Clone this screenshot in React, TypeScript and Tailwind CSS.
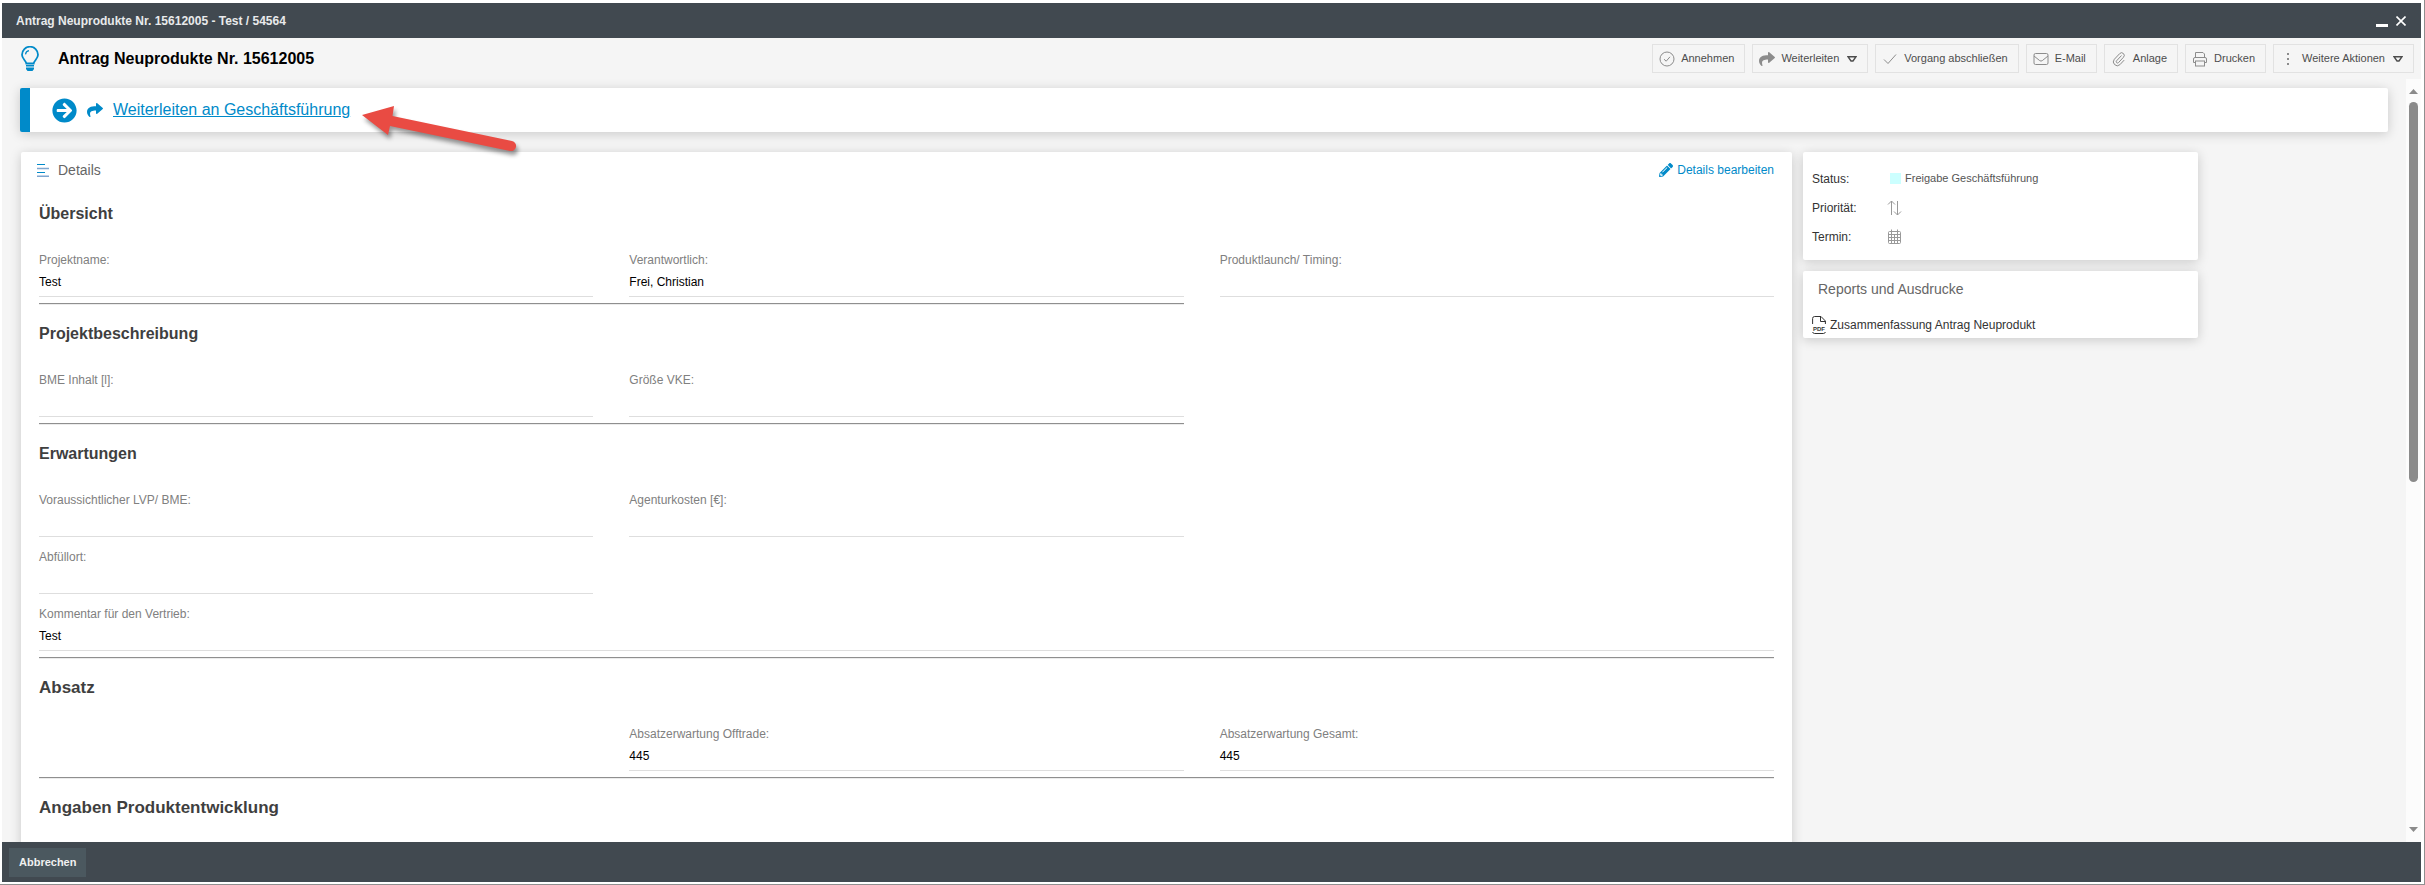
import React from "react";
import { FaShare, FaPencilAlt, FaArrowCircleRight } from "react-icons/fa";

interface Field {
  label: string;
  value?: string;
  className?: string;
}

interface Section {
  title: string;
  fields: Field[];
  wide?: boolean;
  large?: boolean;
}

interface ToolbarAction {
  label: string;
  icon: React.ReactNode;
  menu?: boolean;
}

const sections: Section[] = [
  {
    title: "Übersicht",
    fields: [
      { label: "Projektname:", value: "Test" },
      { label: "Verantwortlich:", value: "Frei, Christian" },
      { label: "Produktlaunch/ Timing:" },
    ],
  },
  {
    title: "Projektbeschreibung",
    fields: [{ label: "BME Inhalt [l]:" }, { label: "Größe VKE:" }],
  },
  {
    title: "Erwartungen",
    wide: true,
    fields: [
      { label: "Voraussichtlicher LVP/ BME:" },
      { label: "Agenturkosten [€]:" },
      { label: "Abfüllort:", className: "col-start-1" },
      { label: "Kommentar für den Vertrieb:", value: "Test", className: "col-span-3" },
    ],
  },
  {
    title: "Absatz",
    wide: true,
    large: true,
    fields: [
      { label: "Absatzerwartung Offtrade:", value: "445", className: "col-start-2" },
      { label: "Absatzerwartung Gesamt:", value: "445" },
    ],
  },
  { title: "Angaben Produktentwicklung", wide: true, large: true, fields: [] },
];

const LineIcon: React.FC<{ children: React.ReactNode; className?: string }> = ({
  children,
  className = "h-4 w-4",
}) => (
  <svg viewBox="0 0 16 16" fill="none" stroke="currentColor" className={className} aria-hidden="true">
    {children}
  </svg>
);

const actions: ToolbarAction[] = [
  {
    label: "Annehmen",
    icon: (
      <LineIcon>
        <circle cx="8" cy="8" r="7" />
        <path d="M5 8.2l2.2 2L11 5.8" />
      </LineIcon>
    ),
  },
  { label: "Weiterleiten", icon: <FaShare className="h-4 w-4" />, menu: true },
  {
    label: "Vorgang abschließen",
    icon: (
      <LineIcon>
        <path d="M2 8.500l4 4L14 3.500" />
      </LineIcon>
    ),
  },
  {
    label: "E-Mail",
    icon: (
      <LineIcon>
        <rect x="1" y="2.500" width="14" height="11" rx="1.500" />
        <path d="M1 5l5.700 4.600q1.300 1 2.600 0L15 5" />
      </LineIcon>
    ),
  },
  {
    label: "Anlage",
    icon: (
      <LineIcon>
        <path d="M10.500 4.500L5.600 9.800a1.300 1.300 0 0 0 1.900 1.800l5-5.400a2.600 2.600 0 0 0-3.800-3.600L3.300 8.300a3.900 3.900 0 0 0 5.600 5.400l4.300-4.600" />
      </LineIcon>
    ),
  },
  {
    label: "Drucken",
    icon: (
      <LineIcon>
        <path d="M3.500 6.500V1.500h7.500l1.500 1.500v3.500M3.500 11.500h-2V8q0-1.500 1.500-1.500h10q1.500 0 1.500 1.500v3.500h-2" />
        <rect x="3.500" y="10" width="9" height="5" />
      </LineIcon>
    ),
  },
  {
    label: "Weitere Aktionen",
    menu: true,
    icon: (
      <svg viewBox="0 0 16 16" fill="currentColor" className="h-4 w-4" aria-hidden="true">
        <rect x="7" y="2" width="2" height="2" />
        <rect x="7" y="7" width="2" height="2" />
        <rect x="7" y="12" width="2" height="2" />
      </svg>
    ),
  },
];

const TitleBar: React.FC = () => (
  <header className="flex h-[35px] shrink-0 items-center justify-between bg-[#414950] pr-[15px] pl-3.5 text-white">
    <span className="text-xs font-bold text-[#e8eaeb]">
      Antrag Neuprodukte Nr. 15612005 - Test / 54564
    </span>
    <div className="flex items-center gap-2">
      <button type="button" aria-label="Minimieren" className="flex h-4 w-3 items-end pb-0.5">
        <span className="h-[3px] w-full bg-white" />
      </button>
      <button type="button" aria-label="Schließen">
        <svg viewBox="0 0 10 10" stroke="currentColor" strokeWidth="1.6" className="h-2.5 w-2.5">
          <path d="M0.500 0.500l9 9M9.500 0.500l-9 9" />
        </svg>
      </button>
    </div>
  </header>
);

const Toolbar: React.FC = () => (
  <div className="flex h-[41px] shrink-0 items-start justify-between pt-1.5 pr-[7px] pl-[18px]">
    <div className="flex h-[30px] items-center">
      <svg viewBox="0 0 20 26" fill="none" className="h-[26px] w-5 text-[#008ac9]" aria-hidden="true">
        <path
          d="M6.300 17.500C6 14.500 2 12.800 2 8.700a8 8 0 0 1 16 0c0 4.100-4 5.800-4.300 8.800z"
          stroke="currentColor"
          strokeWidth="1.800"
        />
        <path d="M5.500 8.300q.4-3 3.500-3.600" stroke="currentColor" strokeWidth="1.200" />
        <path d="M6 19h8v1.500H6zM6 21.500h8v1.500l-1.500 2h-5L6 23z" fill="currentColor" />
      </svg>
      <h1 className="ml-[18px] text-base font-bold text-black">Antrag Neuprodukte Nr. 15612005</h1>
    </div>
    <div className="flex gap-[7px]">
      {actions.map((action) => (
        <button
          key={action.label}
          type="button"
          className="flex h-[29px] items-center border border-[#e2e2e2] pr-2.5 pl-1.5 text-[11px] text-[#4d4d4d]"
        >
          <span className="text-[#8c8c8c]">{action.icon}</span>
          <span className="ml-1.5">{action.label}</span>
          {action.menu && (
            <svg viewBox="0 0 10 8" fill="none" stroke="currentColor" className="ml-2 h-2 w-2.5" aria-hidden="true">
              <path d="M1 1.700h8L6 6H4z" strokeWidth="1.400" />
            </svg>
          )}
        </button>
      ))}
    </div>
  </div>
);

const NextStep: React.FC = () => (
  <div className="relative mr-[18px] flex h-11 items-center rounded-xs border-l-10 border-[#008ac9] bg-white pl-[22px] text-[#008ac9] shadow-[0_2px_12px_rgba(0,0,0,0.18)]">
    <FaArrowCircleRight className="h-[25px] w-[25px]" />
    <FaShare className="ml-2.5 h-4 w-4" />
    <a href="#weiterleiten" className="ml-2.5 text-base underline">
      Weiterleiten an Geschäftsführung
    </a>
    {/* Hint arrow over the banner */}
    <svg
      viewBox="0 0 160 60"
      className="absolute top-[14px] left-[328px] h-[60px] w-[160px] drop-shadow-[2px_4px_2px_rgba(0,0,0,0.4)]"
      aria-hidden="true"
    >
      <path d="M4 13L36 4l-1.500 10L154 39a5 5 0 0 1-2 10L32 24l-2 9z" fill="#e94b43" />
    </svg>
  </div>
);

const FieldView: React.FC<{ field: Field }> = ({ field }) => (
  <div className={`h-[57px] border-b border-[#dedede] pt-3 text-xs ${field.className ?? ""}`}>
    <div className="leading-4 text-[#808080]">{field.label}</div>
    <div className="mt-1.5 leading-4 text-black">{field.value}</div>
  </div>
);

const DetailsCard: React.FC = () => (
  <section className="ml-px min-w-0 flex-1 rounded-xs bg-white px-[18px] shadow-[0_2px_12px_rgba(0,0,0,0.18)]">
    <div className="flex h-[33px] items-center justify-between pt-[3px]">
      <h2 className="flex items-center gap-2 text-sm text-[#666]">
        <svg viewBox="0 0 13 13" className="-ml-0.5 h-[13px] w-[13px]" aria-hidden="true">
          <path d="M0 0.500h8M0 8.500h8" stroke="#008ac9" />
          <path d="M0 4.500h12M0 12.200h12" stroke="#7fa6cf" strokeWidth="1.600" />
        </svg>
        Details
      </h2>
      <a href="#details" className="flex items-center gap-1 text-xs text-[#008ac9]">
        <FaPencilAlt className="h-3.5 w-3.5" />
        Details bearbeiten
      </a>
    </div>
    {sections.map((section) => (
      <div key={section.title}>
        <h3
          className={`pt-[17px] pb-3.5 leading-6 font-bold text-[#3f3f3f] ${
            section.large ? "text-[17px]" : "text-base"
          }`}
        >
          {section.title}
        </h3>
        <div className="grid grid-cols-3 gap-x-9">
          {section.fields.map((field) => (
            <FieldView key={field.label} field={field} />
          ))}
          {section.fields.length > 0 && (
            <hr
              className={`mt-1.5 h-0.5 border-t border-b border-t-[#8f8f8f] border-b-[#ececec] ${
                section.wide ? "col-span-3" : "col-span-2 col-start-1"
              }`}
            />
          )}
        </div>
      </div>
    ))}
  </section>
);

const Sidebar: React.FC = () => (
  <aside className="flex w-[395px] shrink-0 flex-col gap-[11px]">
    <section className="rounded-xs bg-white px-[9px] pt-3 pb-[9px] text-xs text-[#333] shadow-[0_2px_12px_rgba(0,0,0,0.18)]">
      <dl className="grid grid-cols-[75px_1fr] [&>*]:flex [&>*]:h-[29px] [&>*]:items-center">
        <dt>Status:</dt>
        <dd className="gap-1 pl-[3px] text-[11px] text-[#555]">
          <span className="h-[11px] w-[11px] bg-[#ccffff]" />
          Freigabe Geschäftsführung
        </dd>
        <dt>Priorität:</dt>
        <dd className="text-[#999]">
          <LineIcon>
            <path d="M4.500 15V1M1 4.500L4.500 1 8 4.500M10.500 1v14M7 11.500L10.500 15l3.500-3.500" />
          </LineIcon>
        </dd>
        <dt>Termin:</dt>
        <dd className="text-[#999]">
          <LineIcon>
            <rect x="1.500" y="2.500" width="12" height="12" rx="1" />
            <path d="M1.500 5.500h12M1.500 8.500h12M1.500 11.500h12M4.500 0.500v14M7.500 5.500v9M10.500 0.500v14" />
          </LineIcon>
        </dd>
      </dl>
    </section>
    <section className="rounded-xs bg-white px-[9px] pb-px shadow-[0_2px_12px_rgba(0,0,0,0.18)]">
      <h2 className="flex h-[35px] items-center pl-1.5 text-sm text-[#666]">Reports und Ausdrucke</h2>
      <a href="#report" className="mt-[7px] flex h-6 items-center gap-1 text-xs text-[#333]">
        <svg viewBox="0 0 14 18" fill="none" stroke="currentColor" className="h-[18px] w-3.5" aria-hidden="true">
          <path d="M0.600 8V2.500q0-2 2-2H9L13.400 5v3M8.500 0.500V5.500h5M0.600 16q.4 1.500 2 1.500h8.800q1.600 0 2-1.500" />
          <text x="1" y="14.500" fontSize="6" fontWeight="700" fill="currentColor" stroke="none">
            PDF
          </text>
        </svg>
        Zusammenfassung Antrag Neuprodukt
      </a>
    </section>
  </aside>
);

const Scrollbar: React.FC = () => (
  <div className="flex w-[15px] shrink-0 flex-col items-center bg-[#fcfcfc] py-2.5 text-[#8b8b8b]">
    <svg viewBox="0 0 9 5" fill="currentColor" className="h-[5px] w-[9px]" aria-hidden="true">
      <path d="M4.500 0L9 5H0z" />
    </svg>
    <div className="mt-2 mb-2 w-full flex-1 px-[3px]">
      <div className="h-[53%] rounded-full bg-[#8b8b8b]" />
    </div>
    <svg viewBox="0 0 9 5" fill="currentColor" className="h-[5px] w-[9px]" aria-hidden="true">
      <path d="M4.500 5L9 0H0z" />
    </svg>
  </div>
);

const App: React.FC = () => {
  return (
    <div className="h-screen border-r border-b border-[#8f8f8f] bg-white pt-[3px] pr-[3px] pb-0.5 pl-0.5 font-['Liberation_Sans',Arial,sans-serif]">
      <div className="flex h-full flex-col overflow-hidden bg-[#f5f5f5]">
        <TitleBar />
        <Toolbar />
        <div className="flex min-h-0 flex-1">
          <main className="min-w-0 flex-1 overflow-hidden pt-[9px] pl-[18px]">
            <NextStep />
            <div className="mt-5 flex h-full items-stretch gap-[11px] pr-52">
              <DetailsCard />
              <Sidebar />
            </div>
          </main>
          <Scrollbar />
        </div>
        <footer className="flex h-10 shrink-0 items-center bg-[#414950] pl-[7px]">
          <button type="button" className="h-[29px] bg-[#4b585f] px-2.5 text-[11px] font-bold text-[#f0f0f0]">
            Abbrechen
          </button>
        </footer>
      </div>
    </div>
  );
};

export default App;
